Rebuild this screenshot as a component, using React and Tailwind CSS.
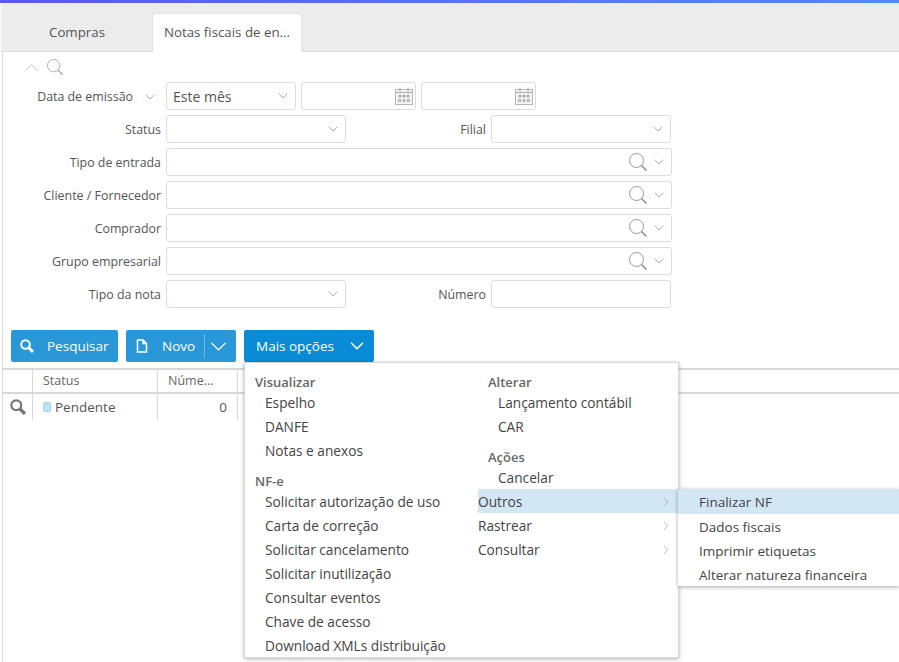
import { ChevronDown, ChevronRight } from "lucide-react";

const font = "font-['Open_Sans',sans-serif]";

function Chevron() {
  return <ChevronDown size={16} strokeWidth={1} className="text-[#8a8a8a] shrink-0" />;
}

// thin lens used in the lookup fields and above the filter
function Lens({ size = 18, className = "" }) {
  return (
    <svg width={size} height={size} viewBox="0 0 18 18" fill="none" stroke="currentColor" className={className}>
      <circle cx="7.500" cy="7.500" r="7" strokeWidth="0.900" />
      <path d="M12.500 12.500L17.500 17.500" strokeWidth="1.500" />
    </svg>
  );
}

// heavy lens used on the button and the grid row
function BoldLens({ size = 14, className = "" }) {
  return (
    <svg width={size} height={size} viewBox="0 0 14 14" fill="none" stroke="currentColor" className={className}>
      <circle cx="5.500" cy="5.500" r="4.300" strokeWidth="2" />
      <path d="M8.800 8.800L13 13" strokeWidth="3" />
    </svg>
  );
}

function CalendarIcon() {
  return (
    <svg width="18" height="18" viewBox="0 0 18 18" fill="none" className="shrink-0">
      <rect x="0.500" y="2.500" width="17" height="15" fill="#f4f4f4" stroke="#b5b5b5" />
      <path d="M0.500 5.500h17M5 0.500v4M13 0.500v4" stroke="#a8a8a8" />
      <circle cx="5" cy="9" r="1.500" fill="#a6a6a6" />
      <circle cx="9" cy="9" r="1.500" fill="#a6a6a6" />
      <circle cx="13" cy="9" r="1.500" fill="#a6a6a6" />
      <path d="M3.500 12.500h2v2h-2zM8 12.500h2v2H8zM12.500 12.500h2v2h-2z" stroke="#a6a6a6" />
    </svg>
  );
}

function Field({ width, value, pad = "pr-[4px]", children }) {
  return (
    <div className={`${width} ${pad} h-[28px] flex items-center border border-[#dcdcdc] rounded-[3px] bg-white pl-[6px] shrink-0`}>
      <span className="flex-1 text-[14px] text-[#555]">{value}</span>
      {children}
    </div>
  );
}

function Label({ className = "w-[161px]", children }) {
  return <div className={`${className} pt-[2px] text-right text-[12.400px] text-[#555] shrink-0`}>{children}</div>;
}

function LookupRow({ label }) {
  return (
    <div className="flex items-center gap-[5px]">
      <Label>{label}</Label>
      <Field width="w-[506px]">
        <Lens className="text-[#8c8c8c] mr-[4px]" />
        <Chevron />
      </Field>
    </div>
  );
}

function MenuGroup({ title, items, className = "" }) {
  return (
    <div className={className}>
      <div className="h-[18px] leading-[18px] pl-[10px] text-[13px] font-semibold text-[#666]">{title}</div>
      {items.map((item) => (
        <div key={item} className="h-[24px] leading-[24px] pl-[20px] text-[13.700px] text-[#444] whitespace-nowrap">
          {item}
        </div>
      ))}
    </div>
  );
}

function SubmenuRow({ label, active }) {
  return (
    <div className={`h-[24px] pt-[2px] flex items-center justify-between pr-[5px] text-[13.700px] text-[#444] ${active ? "bg-[#d3e6f4]" : ""}`}>
      {label}
      <ChevronRight size={14} strokeWidth={1} className="text-[#8a8a8a]" />
    </div>
  );
}

export default function App() {
  return (
    <div className={`${font} relative w-[899px] h-[662px] overflow-hidden bg-white`}>
      <div className="h-[3px] bg-linear-to-r from-[#5a58e8] to-[#4f8cf0]" />

      <div className="h-[49px] bg-[#ececec] border-b border-[#dedede] border-l-2 border-l-[#f6f6f6] flex items-end">
        <div className="w-[150px] h-[37px] flex items-center justify-center text-[13.300px] text-[#555]">Compras</div>
        <div className="w-[150px] h-[39px] -mb-px flex items-center justify-center bg-white border-x border-t border-[#e2e2e2] rounded-t-[3px] text-[13.300px] text-[#555]">
          Notas fiscais de en...
        </div>
      </div>

      <div className="ml-[2px] border-l border-[#dcdcdc] h-[610px]">
        <div className="h-[30px] flex items-center pl-[22px] gap-[9px] text-[#a0a0a0]">
          <svg width="13" height="7" viewBox="0 0 13 7" fill="none" stroke="#c4c4c4">
            <path d="M0.500 6.500L6.500 0.700L12.500 6.500" />
          </svg>
          <Lens size={16} />
        </div>

        <div className="-ml-[3px] flex flex-col gap-[5px]">
          <div className="flex items-center gap-[5px]">
            <div className="w-[161px] flex items-center justify-end gap-[9px] pr-[3px] pt-[2px] shrink-0">
              <span className="text-[12.400px] text-[#555]">Data de emissão</span>
              <Chevron />
            </div>
            <Field width="w-[130px]" value="Este mês"><Chevron /></Field>
            <Field width="w-[115px]" pad="pr-[2px]"><CalendarIcon /></Field>
            <Field width="w-[115px]" pad="pr-[2px]"><CalendarIcon /></Field>
          </div>
          <div className="flex items-center gap-[5px]">
            <Label>Status</Label>
            <Field width="w-[180px]"><Chevron /></Field>
            <Label className="w-[135px]">Filial</Label>
            <Field width="w-[180px]"><Chevron /></Field>
          </div>
          <LookupRow label="Tipo de entrada" />
          <LookupRow label="Cliente / Fornecedor" />
          <LookupRow label="Comprador" />
          <LookupRow label="Grupo empresarial" />
          <div className="flex items-center gap-[5px]">
            <Label>Tipo da nota</Label>
            <Field width="w-[180px]"><Chevron /></Field>
            <Label className="w-[135px]">Número</Label>
            <Field width="w-[180px]" />
          </div>
        </div>

        <div className="mt-[22px] ml-[8px] flex gap-[8px] text-white text-[13.500px]">
          <div className="w-[107px] h-[32px] flex items-center bg-[#2a97d8] rounded-[2px] pl-[9px] gap-[13px]">
            <BoldLens />
            Pesquisar
          </div>
          <div className="w-[110px] h-[32px] flex items-center bg-[#2a97d8] rounded-[2px] pl-[10px]">
            <svg width="12" height="14" viewBox="0 0 12 14" fill="none" stroke="white" strokeWidth="1.500">
              <path d="M1.500 1h5.500l3.500 3.500V13h-9zM7 1v3.500h3.500" />
            </svg>
            <span className="ml-[14px]">Novo</span>
            <div className="ml-[9px] h-[24px] border-l border-[#6fbbe6]" />
            <svg width="15" height="9" viewBox="0 0 15 9" fill="none" stroke="white" strokeWidth="1.200" className="ml-[6px]">
              <path d="M0.500 1L7.500 8L14.500 1" />
            </svg>
          </div>
          <div className="w-[130px] h-[32px] flex items-center bg-[#0a8bd6] rounded-[2px] pl-[12px]">
            Mais opções
            <ChevronDown size={22} strokeWidth={1.800} className="ml-[12px]" />
          </div>
        </div>

        <div className="mt-[6px] h-[26px] flex border-y-2 border-[#d8d8d8] text-[12.500px] text-[#666]">
          <div className="w-[30px] border-r border-[#d8d8d8]" />
          <div className="w-[125px] border-r border-[#d8d8d8] pl-[10px] leading-[22px]">Status</div>
          <div className="w-[80px] border-r border-[#d8d8d8] pl-[10px] leading-[22px]">Núme...</div>
        </div>
        <div className="h-[26px] flex items-center text-[13.500px] text-[#555]">
          <div className="w-[30px] h-full border-r border-[#d8d8d8] flex items-center justify-center">
            <BoldLens size={16} className="text-[#777]" />
          </div>
          <div className="w-[125px] h-full border-r border-[#d8d8d8] pl-[10px] flex items-center gap-[4px]">
            <span className="w-[8px] h-[10px] bg-[#b9e2f7] border border-[#a8d4ec] rounded-[2px]" />
            Pendente
          </div>
          <div className="w-[80px] h-full border-r border-[#d8d8d8] pr-[10px] flex items-center justify-end">0</div>
        </div>
      </div>

      <div className="absolute left-[244px] top-[362px] w-[435px] h-[296px] bg-white border border-[#d8d8d8] shadow-[0_1px_4px_rgba(0,0,0,0.3)] flex">
        <div className="w-[233px] pt-[10px] flex flex-col">
          <MenuGroup title="Visualizar" items={["Espelho", "DANFE", "Notas e anexos"]} />
          <MenuGroup
            className="mt-[9px]"
            title="NF-e"
            items={[
              "Solicitar autorização de uso",
              "Carta de correção",
              "Solicitar cancelamento",
              "Solicitar inutilização",
              "Consultar eventos",
              "Chave de acesso",
              "Download XMLs distribuição",
            ]}
          />
        </div>
        <div className="flex-1 pt-[10px] flex flex-col">
          <MenuGroup title="Alterar" items={["Lançamento contábil", "CAR"]} />
          <MenuGroup className="mt-[9px]" title="Ações" items={["Cancelar"]} />
          <div className="-mt-px">
            <SubmenuRow label="Outros" active />
            <SubmenuRow label="Rastrear" />
            <SubmenuRow label="Consultar" />
          </div>
        </div>
      </div>

      <div className="absolute left-[678px] top-[489px] w-[221px] h-[97px] bg-white shadow-[0_1px_4px_rgba(0,0,0,0.35)] text-[13.500px] text-[#444]">
        <div className="h-[25px] leading-[27px] pl-[21px] bg-[#d3e6f4]">Finalizar NF</div>
        <div className="pt-px">
          <div className="h-[24px] leading-[24px] pl-[21px]">Dados fiscais</div>
          <div className="h-[24px] leading-[24px] pl-[21px]">Imprimir etiquetas</div>
          <div className="h-[24px] leading-[24px] pl-[21px]">Alterar natureza financeira</div>
        </div>
      </div>
    </div>
  );
}
